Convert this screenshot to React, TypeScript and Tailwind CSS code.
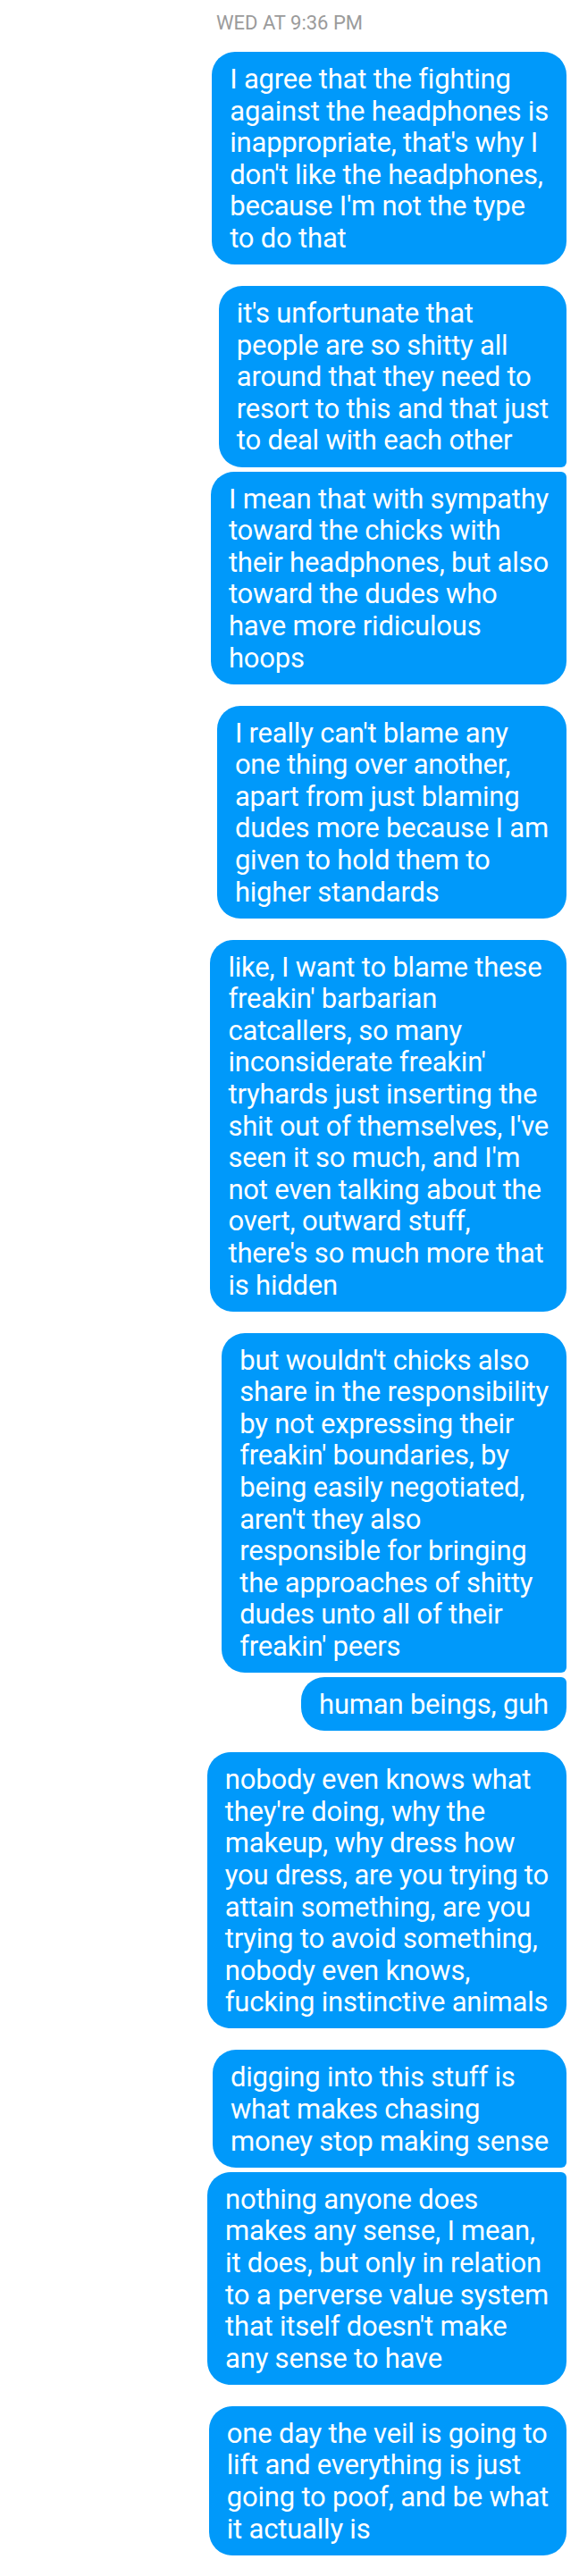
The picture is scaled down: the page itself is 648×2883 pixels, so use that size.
import React from "react";

type Msg = {
  lines: string[];
  // position in a group of consecutive bubbles
  pos: "single" | "first" | "last";
};

const messages: Msg[] = [
  {
    pos: "single",
    lines: [
      "I agree that the fighting",
      "against the headphones is",
      "inappropriate, that's why I",
      "don't like the headphones,",
      "because I'm not the type",
      "to do that",
    ],
  },
  {
    pos: "first",
    lines: [
      "it's unfortunate that",
      "people are so shitty all",
      "around that they need to",
      "resort to this and that just",
      "to deal with each other",
    ],
  },
  {
    pos: "last",
    lines: [
      "I mean that with sympathy",
      "toward the chicks with",
      "their headphones, but also",
      "toward the dudes who",
      "have more ridiculous",
      "hoops",
    ],
  },
  {
    pos: "single",
    lines: [
      "I really can't blame any",
      "one thing over another,",
      "apart from just blaming",
      "dudes more because I am",
      "given to hold them to",
      "higher standards",
    ],
  },
  {
    pos: "single",
    lines: [
      "like, I want to blame these",
      "freakin' barbarian",
      "catcallers, so many",
      "inconsiderate freakin'",
      "tryhards just inserting the",
      "shit out of themselves, I've",
      "seen it so much, and I'm",
      "not even talking about the",
      "overt, outward stuff,",
      "there's so much more that",
      "is hidden",
    ],
  },
  {
    pos: "first",
    lines: [
      "but wouldn't chicks also",
      "share in the responsibility",
      "by not expressing their",
      "freakin' boundaries, by",
      "being easily negotiated,",
      "aren't they also",
      "responsible for bringing",
      "the approaches of shitty",
      "dudes unto all of their",
      "freakin' peers",
    ],
  },
  { pos: "last", lines: ["human beings, guh"] },
  {
    pos: "single",
    lines: [
      "nobody even knows what",
      "they're doing, why the",
      "makeup, why dress how",
      "you dress, are you trying to",
      "attain something, are you",
      "trying to avoid something,",
      "nobody even knows,",
      "fucking instinctive animals",
    ],
  },
  {
    pos: "first",
    lines: [
      "digging into this stuff is",
      "what makes chasing",
      "money stop making sense",
    ],
  },
  {
    pos: "last",
    lines: [
      "nothing anyone does",
      "makes any sense, I mean,",
      "it does, but only in relation",
      "to a perverse value system",
      "that itself doesn't make",
      "any sense to have",
    ],
  },
  {
    pos: "single",
    lines: [
      "one day the veil is going to",
      "lift and everything is just",
      "going to poof, and be what",
      "it actually is",
    ],
  },
];

function Bubble({ msg }: { msg: Msg }) {
  const corners =
    msg.pos === "first"
      ? "rounded-[26px] rounded-br-[6px]"
      : msg.pos === "last"
      ? "rounded-[26px] rounded-tr-[6px]"
      : "rounded-[26px]";
  return (
    <div
      className={`${corners} bg-[#0099fa] text-white px-[20px] pt-[13px] pb-[11.5px] text-[31px] leading-[35.6px] tracking-[-0.2px] whitespace-nowrap`}
    >
      {msg.lines.map((l, i) => (
        <div key={i}>{l}</div>
      ))}
    </div>
  );
}

export default function App() {
  return (
    <div
      className="min-h-[2883px] w-[648px] bg-white pt-[13px] pb-[23px]"
      style={{ fontFamily: "Roboto, 'Noto Sans', sans-serif" }}
    >
      <div className="text-center text-[22px] leading-[26px] text-[#9b9b9b] mb-[19px]">
        WED AT 9:36 PM
      </div>
      <div className="flex flex-col items-end pr-[14px]">
        {messages.map((m, i) => {
          const prev = messages[i - 1];
          const grouped = m.pos === "last" && prev && prev.pos === "first";
          return (
            <div key={i} className={i === 0 ? "" : grouped ? "mt-[5px]" : "mt-[24px]"}>
              <Bubble msg={m} />
            </div>
          );
        })}
      </div>
    </div>
  );
}
